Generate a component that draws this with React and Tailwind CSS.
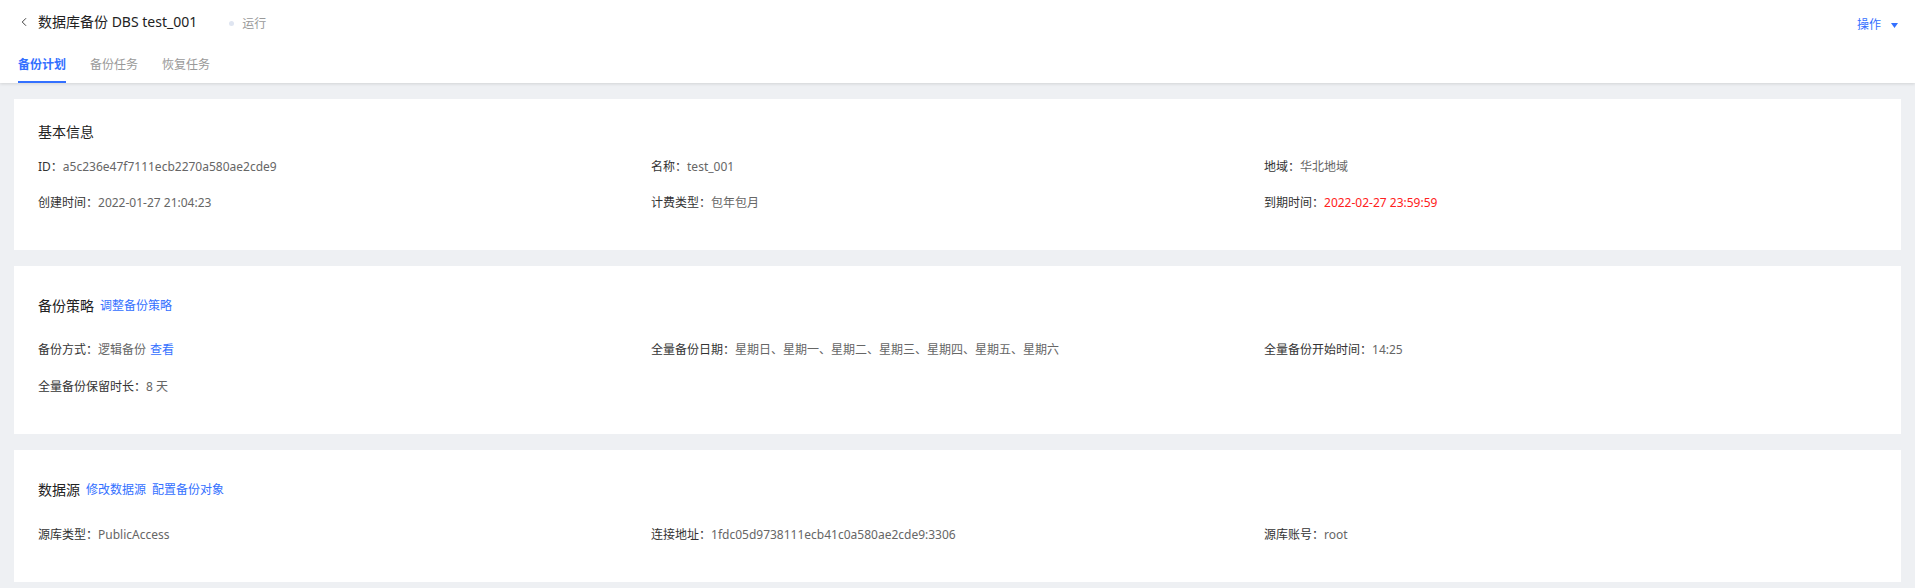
import { ChevronLeft } from "lucide-react";

// Page: detalhe de um plano de backup (DBS)
const BASIC = [
  { label: "ID", value: "a5c236e47f7111ecb2270a580ae2cde9" },
  { label: "名称", value: "test_001" },
  { label: "地域", value: "华北地域" },
  { label: "创建时间", value: "2022-01-27 21:04:23" },
  { label: "计费类型", value: "包年包月" },
  { label: "到期时间", value: "2022-02-27 23:59:59", danger: true },
];

const STRATEGY = [
  { label: "备份方式", value: "逻辑备份", link: "查看" },
  { label: "全量备份日期", value: "星期日、星期一、星期二、星期三、星期四、星期五、星期六" },
  { label: "全量备份开始时间", value: "14:25" },
  { label: "全量备份保留时长", value: "8 天" },
];

const SOURCE = [
  { label: "源库类型", value: "PublicAccess" },
  { label: "连接地址", value: "1fdc05d9738111ecb41c0a580ae2cde9:3306" },
  { label: "源库账号", value: "root" },
];

const TABS = ["备份计划", "备份任务", "恢复任务"];

function Field({ label, value, link, danger }) {
  return (
    <div className="h-[20px] text-[12px] leading-[20px] whitespace-nowrap">
      <span className="text-[#333]">{label}：</span>
      <span className={danger ? "text-[#ff2020]" : "text-[#666]"}>{value}</span>
      {link && <span className="ml-[4px] text-[#3370ff]">{link}</span>}
    </div>
  );
}

function Card({ title, links = [], fields, pad, gapTop, gapRows }) {
  return (
    <section className={`bg-white px-[24px] ${pad}`}>
      <div className="flex h-[20px] items-center gap-[6px] text-[14px] leading-[20px]">
        <span className="text-[#222]">{title}</span>
        {links.map((l) => (
          <span key={l} className="text-[12px] text-[#3370ff]">
            {l}
          </span>
        ))}
      </div>
      <div className={`grid grid-cols-3 ${gapTop} ${gapRows}`}>
        {fields.map((f) => (
          <Field key={f.label} {...f} />
        ))}
      </div>
    </section>
  );
}

export default function App() {
  return (
    <div
      className="min-h-[588px] bg-[#eef0f3] pb-[6px]"
      style={{ fontFamily: '"Noto Sans", "Noto Sans CJK SC", sans-serif' }}
    >
      {/* Cabeçalho */}
      <header className="bg-white shadow-[0_1px_3px_rgba(0,0,0,0.12)]">
        <div className="flex h-[44px] items-center justify-between pl-[17px] pr-[17px]">
          <div className="flex items-center">
            <ChevronLeft size={14} strokeWidth={1.6} className="text-[#333]" />
            <span className="ml-[7px] text-[14px] leading-[20px] text-[#222]">
              数据库备份 DBS test_001
            </span>
            <span className="ml-[32px] mt-[3px] h-[5px] w-[5px] rounded-full bg-[#dfe5f1]" />
            <span className="ml-[8px] mt-[3px] text-[12px] text-[#999]">运行</span>
          </div>
          <div className="mt-[5px] flex items-center gap-[10px] text-[12px] text-[#3370ff]">
            <span>操作</span>
            <svg width="7" height="5" viewBox="0 0 7 5" className="mt-[1px]">
              <path d="M0 0h7L3.5 5z" fill="#3370ff" />
            </svg>
          </div>
        </div>
        <nav className="flex gap-[24px] pl-[18px]">
          {TABS.map((t, i) => (
            <div
              key={t}
              className={`h-[39px] pt-[13px] text-[12px] leading-[16px] ${
                i === 0
                  ? "border-b-2 border-[#3370ff] font-bold text-[#3370ff]"
                  : "text-[#999]"
              }`}
            >
              {t}
            </div>
          ))}
        </nav>
      </header>

      <main className="mx-[14px] mt-[16px] flex flex-col gap-[16px]">
        <Card
          title="基本信息"
          fields={BASIC}
          pad="pt-[23px] pb-[37px]"
          gapTop="mt-[15px]"
          gapRows="gap-y-[16px]"
        />
        <Card
          title="备份策略"
          links={["调整备份策略"]}
          fields={STRATEGY}
          pad="pt-[30px] pb-[37px]"
          gapTop="mt-[24px]"
          gapRows="gap-y-[17px]"
        />
        <Card
          title="数据源"
          links={["修改数据源", "配置备份对象"]}
          fields={SOURCE}
          pad="pt-[30px] pb-[37px]"
          gapTop="mt-[25px]"
          gapRows="gap-y-[16px]"
        />
      </main>
    </div>
  );
}
